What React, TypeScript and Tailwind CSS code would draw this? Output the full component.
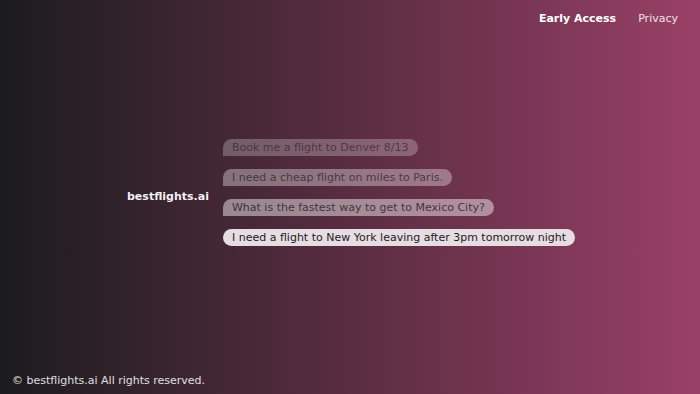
import React from 'react'

const prompts = [
  { text: 'Book me a flight to Denver 8/13', cls: 'bg-white/25 text-[#2a1620]/60 rounded-bl-none' },
  { text: 'I need a cheap flight on miles to Paris.', cls: 'bg-white/35 text-[#2a1620]/70 rounded-bl-none' },
  { text: 'What is the fastest way to get to Mexico City?', cls: 'bg-white/45 text-[#2a1620]/80 rounded-bl-none' },
  { text: 'I need a flight to New York leaving after 3pm tomorrow night', cls: 'bg-[#e6dde2] text-[#1f1a1d]' },
]

export default function App() {
  return (
    <div
      className="w-[700px] h-[394px] flex flex-col bg-gradient-to-r from-[#1b1b1e] via-[#5a2d42] to-[#9a4067] text-white"
      style={{ fontFamily: '"DejaVu Sans", sans-serif' }}
    >
      <nav className="flex justify-end items-center gap-[22px] pt-[11px] pr-[22px] text-[11px]">
        <a className="font-bold text-white">Early Access</a>
        <a className="text-white/85">Privacy</a>
      </nav>

      <main className="flex-1 flex items-center justify-center gap-[14px] pb-[16px]">
        <h1 className="text-[11px] font-bold text-white/95 mt-[10px] ml-[2px]">bestflights.ai</h1>
        <div className="flex flex-col items-start gap-[13px]">
          {prompts.map((p) => (
            <div key={p.text} className={`rounded-full px-[9px] h-[17px] flex items-center text-[11px] leading-none ${p.cls}`}>
              {p.text}
            </div>
          ))}
        </div>
      </main>

      <footer className="pl-[12px] pb-[5px] text-[11px] text-white/85">
        © bestflights.ai All rights reserved.
      </footer>
    </div>
  )
}
